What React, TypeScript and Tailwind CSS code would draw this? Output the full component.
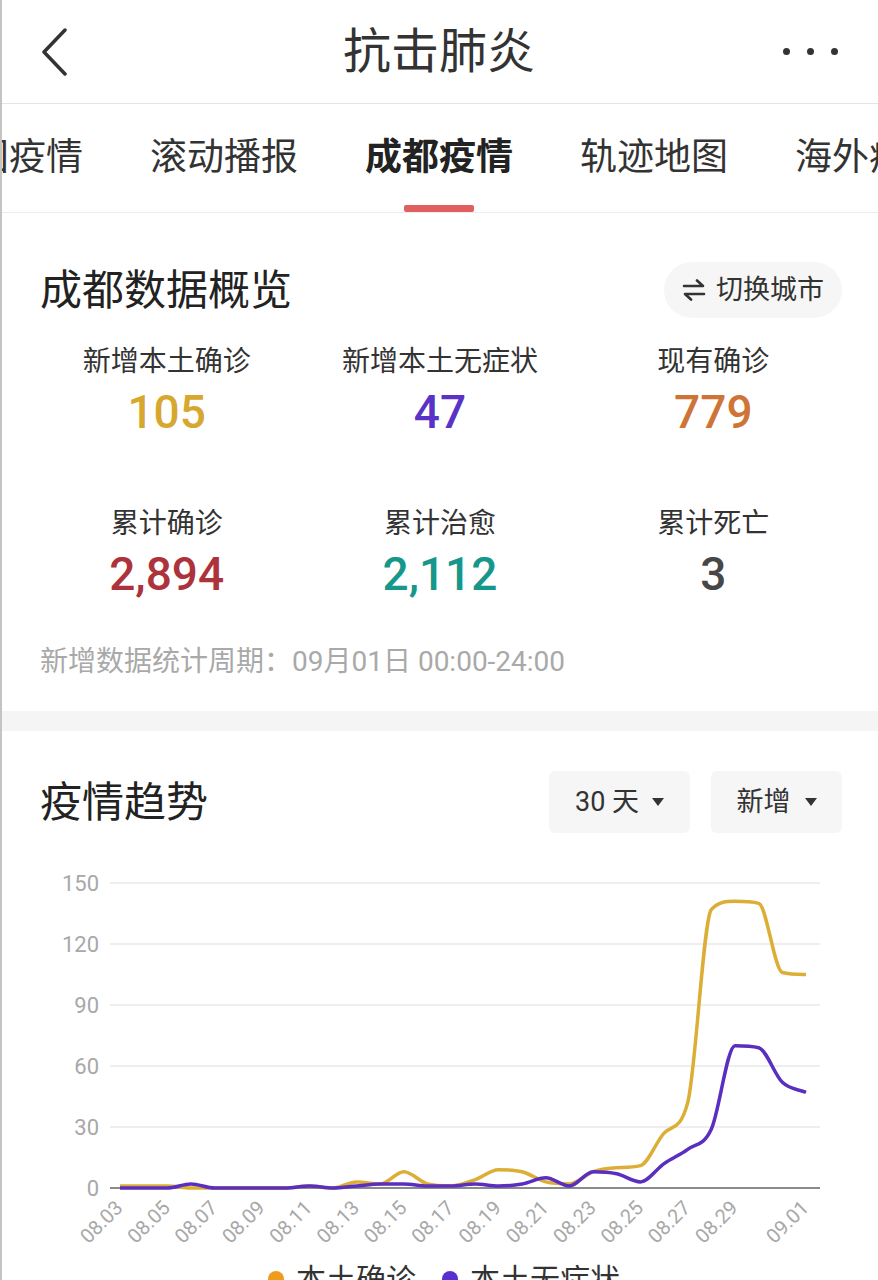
import React from "react";

const gold = [1, 1, 1, 0, 0, 0, 0, 0, 1, 0, 3, 2, 8, 2, 1, 4, 9, 8, 3, 2, 8, 10, 11, 27, 42, 137, 141, 140, 106, 105];
const purple = [0, 0, 0, 2, 0, 0, 0, 0, 1, 0, 1, 2, 2, 1, 1, 2, 1, 2, 5, 1, 8, 7, 3, 12, 19, 29, 70, 69, 52, 47];

const X0 = 120;
const STEP = (806 - 120) / 29;
const BASE = 1189;
const px = (i: number) => X0 + i * STEP;
const py = (v: number) => BASE - v * (305 / 150);

// monotone cubic so the smooth line never dips below zero
function smoothPath(values: number[]) {
  const pts = values.map((v, i) => [px(i), py(v)]);
  const n = pts.length;
  const m: number[] = [];
  for (let k = 0; k < n - 1; k++) {
    m.push((pts[k + 1][1] - pts[k][1]) / (pts[k + 1][0] - pts[k][0]));
  }
  const t: number[] = new Array(n).fill(0);
  t[0] = m[0];
  t[n - 1] = m[n - 2];
  for (let k = 1; k < n - 1; k++) {
    t[k] = m[k - 1] * m[k] <= 0 ? 0 : (m[k - 1] + m[k]) / 2;
  }
  for (let k = 0; k < n - 1; k++) {
    if (m[k] === 0) {
      t[k] = 0;
      t[k + 1] = 0;
      continue;
    }
    const a = t[k] / m[k];
    const b = t[k + 1] / m[k];
    const s = a * a + b * b;
    if (s > 9) {
      const tau = 3 / Math.sqrt(s);
      t[k] = tau * a * m[k];
      t[k + 1] = tau * b * m[k];
    }
  }
  let d = `M${pts[0][0]},${pts[0][1]}`;
  for (let k = 0; k < n - 1; k++) {
    const [x0, y0] = pts[k];
    const [x1, y1] = pts[k + 1];
    const h = (x1 - x0) / 3;
    d += ` C${x0 + h},${y0 + t[k] * h} ${x1 - h},${y1 - t[k + 1] * h} ${x1},${y1}`;
  }
  return d;
}

const xLabels: [number, string][] = [
  [0, "08.03"], [2, "08.05"], [4, "08.07"], [6, "08.09"], [8, "08.11"], [10, "08.13"], [12, "08.15"],
  [14, "08.17"], [16, "08.19"], [18, "08.21"], [20, "08.23"], [22, "08.25"], [24, "08.27"], [26, "08.29"], [29, "09.01"],
];

const tabs = ["全国疫情", "滚动播报", "成都疫情", "轨迹地图", "海外疫情"];

const stats = [
  { label: "新增本土确诊", value: "105", color: "text-[#d6a82f]" },
  { label: "新增本土无症状", value: "47", color: "text-[#5a33c6]" },
  { label: "现有确诊", value: "779", color: "text-[#cf7437]" },
  { label: "累计确诊", value: "2,894", color: "text-[#ac323b]" },
  { label: "累计治愈", value: "2,112", color: "text-[#16978b]" },
  { label: "累计死亡", value: "3", color: "text-[#474747]" },
];

function Caret() {
  return (
    <svg width="12" height="8" viewBox="0 0 12 8">
      <path d="M0 0H12L6 8Z" fill="#333" />
    </svg>
  );
}

export default function App() {
  return (
    <div className="w-full h-[1280px] overflow-hidden bg-white border-l-2 border-[#c4c4c4] font-[Roboto,'Noto_Sans_CJK_SC',sans-serif] text-[#333]">
      {/* top bar */}
      <header className="h-[104px] border-b border-[#e4e4e4] grid grid-cols-[1fr_auto_1fr] items-center pl-[38px] pr-[40px]">
        <svg width="30" height="48" viewBox="0 0 30 48" fill="none">
          <path d="M25 2L4 24L25 46" stroke="#333" strokeWidth="3.5" strokeLinecap="round" strokeLinejoin="round" />
        </svg>
        <h1 className="text-[48px] leading-none text-[#333]">抗击肺炎</h1>
        <div className="flex items-center justify-end gap-[17px]">
          <span className="w-[7px] h-[7px] rounded-full bg-[#333]"></span>
          <span className="w-[7px] h-[7px] rounded-full bg-[#333]"></span>
          <span className="w-[7px] h-[7px] rounded-full bg-[#333]"></span>
        </div>
      </header>

      {/* tabs */}
      <nav className="h-[109px] border-b border-[#ececec] overflow-hidden">
        <div className="h-full flex gap-[67px] ml-[-67px] whitespace-nowrap">
          {tabs.map((t) => {
            const active = t === "成都疫情";
            return (
              <div key={t} className="relative h-full flex items-center shrink-0">
                <span className={active ? "text-[37px] font-bold text-[#222]" : "text-[37px] text-[#333]"}>{t}</span>
                {active && (
                  <span className="absolute bottom-0 left-1/2 -translate-x-1/2 w-[70px] h-[7px] rounded-[2px] bg-[#e05f5f]"></span>
                )}
              </div>
            );
          })}
        </div>
      </nav>

      {/* overview */}
      <section className="pt-[49px] pb-[32px]">
        <div className="h-[56px] flex items-center justify-between pl-[38px] pr-[36px]">
          <h2 className="text-[42px] text-[#222]">成都数据概览</h2>
          <button className="h-[56px] px-[18px] rounded-full bg-[#f6f6f6] flex items-center gap-[10px] text-[27px] text-[#333]">
            <svg width="24" height="22" viewBox="0 0 24 22" fill="none">
              <path d="M2 7H21L15 1.5" stroke="#333" strokeWidth="2.6" strokeLinecap="round" strokeLinejoin="round" />
              <path d="M22 15H3L9 20.5" stroke="#333" strokeWidth="2.6" strokeLinecap="round" strokeLinejoin="round" />
            </svg>
            切换城市
          </button>
        </div>

        <div className="grid grid-cols-3 px-[28px] mt-[26px] gap-y-[65px]">
          {stats.map((s) => (
            <div key={s.label} className="flex flex-col items-center">
              <span className="text-[28px] leading-[36px] text-[#333]">{s.label}</span>
              <span className={`text-[46px] leading-[58px] mt-[3px] font-medium ${s.color}`}>{s.value}</span>
            </div>
          ))}
        </div>

        <p className="mt-[42px] pl-[38px] text-[28px] leading-[34px] text-[#a9a9a9]">
          新增数据统计周期：09月01日 00:00-24:00
        </p>
      </section>

      <div className="h-[20px] bg-[#f5f5f5]"></div>

      {/* trend */}
      <section className="pt-[40px]">
        <div className="h-[62px] flex items-center justify-between pl-[38px] pr-[36px]">
          <h2 className="text-[42px] text-[#222]">疫情趋势</h2>
          <div className="flex gap-[21px]">
            <button className="w-[141px] h-[62px] rounded-[6px] bg-[#f6f6f6] flex items-center justify-center gap-[13px] text-[27px] text-[#333]">
              30 天 <Caret />
            </button>
            <button className="w-[131px] h-[62px] rounded-[6px] bg-[#f6f6f6] flex items-center justify-center gap-[14px] text-[27px] text-[#333]">
              新增 <Caret />
            </button>
          </div>
        </div>

        <svg className="block" width="876" height="416" viewBox="2 834 876 416">
          {[884, 945, 1006, 1067, 1128].map((y) => (
            <line key={y} x1="110" x2="820" y1={y} y2={y} stroke="#eeeeee" strokeWidth="2" />
          ))}
          <line x1="110" x2="820" y1={BASE} y2={BASE} stroke="#8a8a8a" strokeWidth="2" />
          {[150, 120, 90, 60, 30, 0].map((v, i) => (
            <text key={v} x="99" y={884 + i * 61} dy="0.36em" textAnchor="end" fontSize="22" fill="#a8a8a8">
              {v}
            </text>
          ))}
          {xLabels.map(([i, l]) => (
            <text
              key={l}
              x={px(i) + 4}
              y={1210}
              textAnchor="end"
              fontSize="20"
              fill="#a8a8a8"
              transform={`rotate(-45 ${px(i) + 4} 1210)`}
            >
              {l}
            </text>
          ))}
          <path d={smoothPath(gold)} fill="none" stroke="#dcae35" strokeWidth="3.5" strokeLinejoin="round" />
          <path d={smoothPath(purple)} fill="none" stroke="#5a2fbf" strokeWidth="3.5" strokeLinejoin="round" />
        </svg>

        <div className="h-[60px] flex items-center justify-center gap-[26px] text-[30px] text-[#333] pl-[8px]">
          <div className="flex items-center gap-[12px]">
            <span className="w-[16px] h-[16px] rounded-full bg-[#ee9c1c]"></span>
            本土确诊
          </div>
          <div className="flex items-center gap-[12px]">
            <span className="w-[16px] h-[16px] rounded-full bg-[#5a2fd0]"></span>
            本土无症状
          </div>
        </div>
      </section>
    </div>
  );
}
